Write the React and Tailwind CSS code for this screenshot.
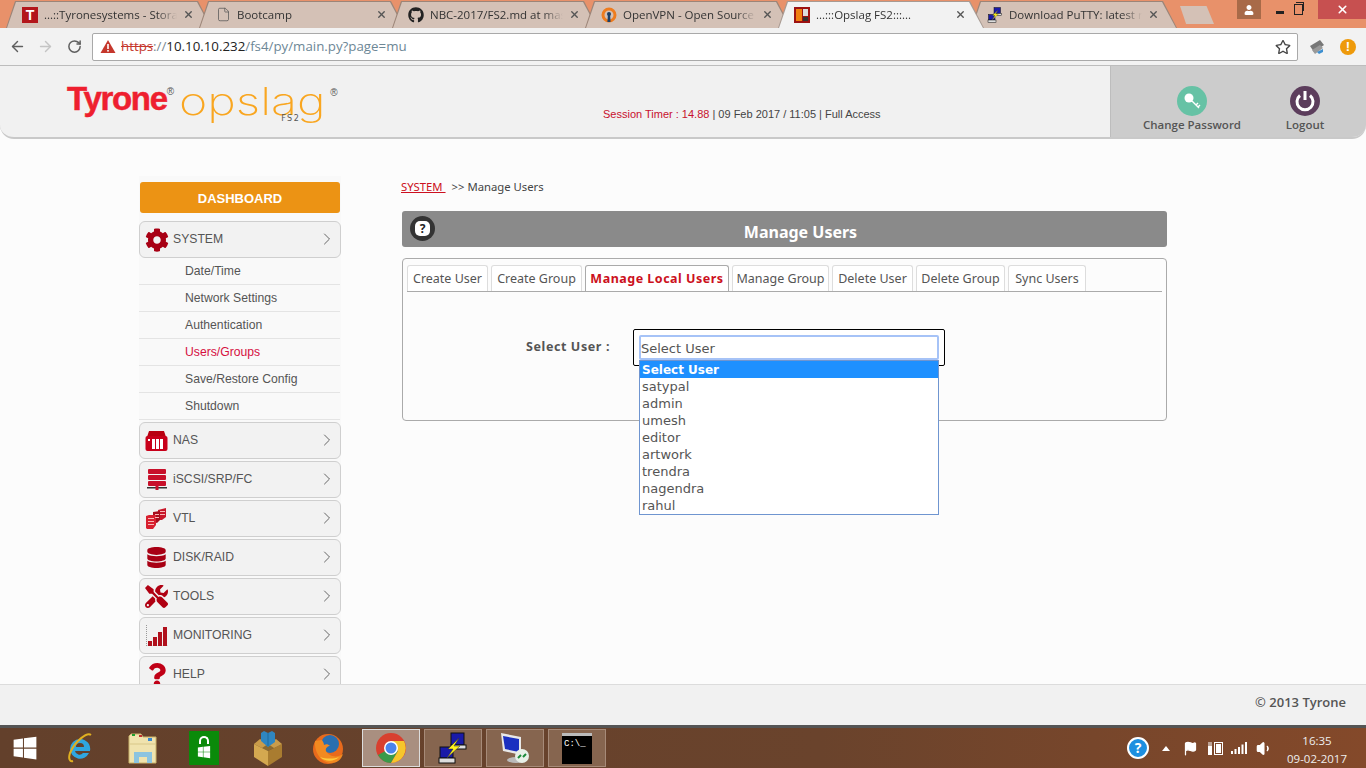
import { FaCog, FaDatabase, FaGithub, FaQuestion, FaTools, FaRegStar, FaWindows, FaUser } from "react-icons/fa";
import { ChevronRight, ArrowLeft, ArrowRight, RotateCw, X, File, Volume1, Flag } from "lucide-react";

const sans = "font-['Liberation_Sans',Arial,sans-serif]";
const ui = "font-['Open_Sans','Noto_Sans',sans-serif]";
const tahoma = "font-['Noto_Sans','DejaVu_Sans',sans-serif]";
const verdana = "font-['DejaVu_Sans',Verdana,sans-serif]";

function TyroneFav() {
  return (
    <div className="w-4 h-4 bg-[#b3161b] flex items-center justify-center">
      <span className={`text-white font-bold text-[14px] leading-none ${sans}`}>T</span>
    </div>
  );
}

function OpenVpnFav() {
  return (
    <svg width="16" height="16" viewBox="0 0 16 16">
      <circle cx="8" cy="8" r="6" fill="none" stroke="#ee7c1f" strokeWidth="3" />
      <path d="M7 6h2l.6 9H6.400z" fill="#1d3f66" />
      <circle cx="8" cy="7" r="2" fill="#1d3f66" />
    </svg>
  );
}

function OpslagFav() {
  return (
    <svg width="16" height="16" viewBox="0 0 16 16">
      <rect width="16" height="16" fill="#9c1212" />
      <rect x="2" y="2" width="6" height="12" fill="#f08010" />
      <rect x="9" y="2" width="5" height="7" fill="#ddd" />
      <rect x="9" y="10" width="5" height="4" fill="#333" />
    </svg>
  );
}

function PuttyIcon({ size = 16 }) {
  return (
    <svg width={size} height={size} viewBox="0 0 32 32">
      <rect x="14" y="1" width="13" height="12" fill="#1a1aa8" stroke="#111" />
      <rect x="14" y="13" width="15" height="4" fill="#ddd" stroke="#111" />
      <rect x="3" y="15" width="13" height="11" fill="#1a1aa8" stroke="#111" />
      <rect x="2" y="26" width="16" height="5" fill="#ddd" stroke="#111" />
      <path d="M22 6L11 17h5l-6 9 13-12h-6z" fill="#fff21a" stroke="#333" strokeWidth=".5" />
    </svg>
  );
}

function Tab({ icon, title, active }) {
  return (
    <div className={`relative w-[206px] h-[27px] -mr-[13px] shrink-0 [clip-path:polygon(0_100%,9px_0,calc(100%-14px)_0,100%_100%)] ${active ? "z-10 bg-[#a89a92]" : "bg-[#9c8578]"}`}>
      <div
        className={`h-full flex items-center pl-[15px] pr-[13px] gap-[6px] [clip-path:polygon(1px_100%,10px_1px,calc(100%-15px)_1px,calc(100%-1px)_100%)] ${
          active ? "bg-[#f2f2f2]" : "bg-[#d4c1b6]"
        }`}
      >
        <div className="w-4 h-4 shrink-0 ml-[1px] flex items-center justify-center">{icon}</div>
        <span className={`flex-1 min-w-0 whitespace-nowrap overflow-hidden text-[11.5px] text-[#333] ${ui} [mask-image:linear-gradient(90deg,#000_85%,transparent)]`}>
          {title}
        </span>
        <X size={11} strokeWidth={3} className="shrink-0 mr-[5px] text-[#555]" />
      </div>
    </div>
  );
}

function TabStrip() {
  return (
    <div className="h-[28px] bg-[#e8916a] flex items-end pl-[6px] shrink-0 relative">
      <Tab icon={<TyroneFav />} title="...::Tyronesystems - Storage" />
      <Tab icon={<File size={15} strokeWidth={1.2} className="text-[#555]" />} title="Bootcamp" />
      <Tab icon={<FaGithub size={16} className="text-[#222]" />} title="NBC-2017/FS2.md at master" />
      <Tab icon={<OpenVpnFav />} title="OpenVPN - Open Source VPN" />
      <Tab icon={<OpslagFav />} title="...:::Opslag FS2:::..." active />
      <Tab icon={<PuttyIcon />} title="Download PuTTY: latest release" />
      <div className="w-[34px] h-[18px] mb-[4px] ml-[16px] bg-[#d4c1b6] [clip-path:polygon(0_0,78%_0,100%_100%,18%_100%)]" />
      <div className="ml-auto flex h-[19px] self-start">
        <div className="w-[24px] bg-[#a86a48] flex items-center justify-center">
          <FaUser size={10} className="text-white" />
        </div>
        <div className="w-[57px] flex items-center justify-center gap-[10px]">
          <div className="w-[8px] h-[3px] mt-[5px] bg-[#222]" />
          <div className="relative w-[9px] h-[11px] border-[1.5px] border-[#222]">
            <div className="absolute -top-[3px] left-[1px] w-[8px] h-[9px] border-t border-r border-[#222]" />
          </div>
        </div>
        <div className="w-[48px] bg-[#c75050] flex items-center justify-center">
          <X size={13} strokeWidth={3} className="text-white" />
        </div>
      </div>
    </div>
  );
}

function Toolbar() {
  return (
    <div className="h-[38px] bg-[#f2f2f2] border-b border-[#bdbdbd] flex items-center pl-[9px] shrink-0 relative">
      <ArrowLeft size={17} strokeWidth={2} className="text-[#5f5f5f]" />
      <ArrowRight size={17} strokeWidth={2} className="text-[#c4c4c4] ml-[11px]" />
      <RotateCw size={15} strokeWidth={2.4} className="text-[#5f5f5f] ml-[13px]" />
      <div className={`ml-[10px] w-[1206px] h-[28px] bg-white border border-[#a9a9a9] rounded-[2px] flex items-center pl-[7px] pr-[6px] text-[13.3px] ${ui}`}>
        <svg width="16" height="15" viewBox="0 0 16 15">
          <path d="M8 1l7.500 13H.5z" fill="#c5372c" />
          <rect x="7.200" y="5" width="1.600" height="5" fill="#fff" />
          <rect x="7.200" y="11" width="1.600" height="1.600" fill="#fff" />
        </svg>
        <span className="ml-[5px] text-[#c5372c] line-through">https</span>
        <span className="text-[#7b8a93]">://</span>
        <span className="text-[#222]">10.10.10.232</span>
        <span className="text-[#6d8796]">/fs4/py/main.py?page=mu</span>
        <FaRegStar size={16} className="ml-auto text-[#444]" />
      </div>
      <svg className="ml-[10px]" width="18" height="18" viewBox="0 0 18 18">
        <path d="M2 8l10-6 4 5-10 7z" fill="#777" />
        <path d="M4 12l8-5 3 3-8 6z" fill="#999" />
        <path d="M9 14l6-3v3l-4 2z" fill="#3d8fd0" />
      </svg>
      <div className={`ml-[14px] w-[16px] h-[16px] rounded-full bg-[#ee9a0b] flex items-center justify-center text-white font-bold text-[13px] leading-none ${sans}`}>!</div>
    </div>
  );
}

function Header() {
  return (
    <div className="h-[73px] bg-[#f1f1f1] border-b-2 border-[#c9c9c9] rounded-bl-[14px] rounded-br-[14px] flex shrink-0 overflow-hidden">
      <div className="w-[603px] pl-[67px] pt-[14px] flex items-start shrink-0">
        <span className={`text-[#ee1f2f] font-bold text-[33px] leading-[38px] tracking-[-1.3px] [-webkit-text-stroke:0.5px_#ee1f2f] ${sans}`}>Tyrone</span>
        <span className={`text-[#555] text-[10px] leading-none mt-[7px] ${sans}`}>®</span>
        <div className="relative ml-[5px] w-[151px] h-[44px]">
          <span className="absolute left-0 -top-[1px] origin-left scale-x-[1.27] text-[#f9a620] font-['Inter',sans-serif] font-extralight text-[38px] leading-[44px]">opslag</span>
          <span className={`absolute left-[102px] top-[35px] text-[#555] text-[8px] leading-none tracking-[1.5px] ${verdana}`}>FS2</span>
        </div>
        <span className={`text-[#555] text-[10px] leading-none mt-[8px] ${sans}`}>®</span>
      </div>
      <div className={`flex-1 pt-[42px] text-[11px] leading-[13px] text-[#444] ${sans}`}>
        <span className="text-[#c8102e]">Session Timer : 14.88</span> | 09 Feb 2017 / 11:05 | Full Access
      </div>
      <div className={`w-[256px] bg-[#cccccc] border-l border-[#bdbdbd] relative flex text-[11.5px] font-semibold text-[#555] ${ui}`}>
        <div className="w-[162px] flex flex-col items-center pt-[20px]">
          <svg width="30" height="30" viewBox="0 0 30 30">
            <circle cx="15" cy="15" r="15" fill="#66c2a5" />
            <circle cx="12" cy="12" r="4.500" fill="#fff" />
            <path d="M15 15l7 7M19 19l2-2M21 21l2-2" stroke="#fff" strokeWidth="1.400" />
          </svg>
          <span className="leading-[16px] mt-[1px]">Change Password</span>
        </div>
        <div className="w-[64px] flex flex-col items-center pt-[20px]">
          <svg width="30" height="30" viewBox="0 0 30 30">
            <circle cx="15" cy="15" r="15" fill="#5c3d5c" />
            <path d="M10 9.500a8 8 0 1 0 10 0" fill="none" stroke="#fff" strokeWidth="3" />
            <path d="M15 5v9" stroke="#fff" strokeWidth="3" />
          </svg>
          <span className="leading-[16px] mt-[1px]">Logout</span>
        </div>
      </div>
    </div>
  );
}

const NasIcon = (
  <svg width="23" height="22" viewBox="0 0 23 22">
    <path d="M2 7l2-6h15l2 6z" fill="#b80010" />
    <rect x="0.500" y="6" width="22" height="15" rx="2" fill="#c8001a" />
    <rect x="7" y="9" width="3" height="10" fill="#fff" />
    <rect x="11" y="9" width="3" height="10" fill="#fff" />
    <rect x="15" y="9" width="3" height="10" fill="#fff" />
    <rect x="3" y="9" width="2" height="2" fill="#fff" />
  </svg>
);

const ScsiIcon = (
  <svg width="20" height="21" viewBox="0 0 20 21">
    <rect x="1" y="0" width="18" height="5" rx="1" fill="#c8102a" />
    <rect x="1" y="6" width="18" height="5" rx="1" fill="#c8102a" />
    <rect x="1" y="12" width="18" height="5" rx="1" fill="#c8102a" />
    <rect x="0" y="18" width="20" height="1.500" fill="#333" />
    <rect x="8.500" y="16" width="3" height="5" fill="#c8102a" />
  </svg>
);

const VtlIcon = (
  <svg width="21" height="21" viewBox="0 0 21 21">
    <path d="M12 2l8-2v9l-4 3h-4z" fill="#c8182a" />
    <path d="M7 4l7-1v9l-3 3-4-1z" fill="#a80c1c" />
    <path d="M0 8l3-1h7v10l-3 4H1l-1-1z" fill="#d8202f" />
    <path d="M2 10h6v1H2zM2 13h6v1H2zM2 16h6v1H2zM9 6h4v1H9zM9 9h4v1H9zM14 3h5v1h-5zM14 6h5v1h-5z" fill="#f8b8b8" />
  </svg>
);

const BarsIcon = (
  <svg width="22" height="21" viewBox="0 0 22 21">
    <path d="M0.500 0v21H22" fill="none" stroke="#999" strokeDasharray="1 1" />
    <rect x="2" y="16" width="4" height="5" fill="#b0101c" />
    <rect x="7" y="12" width="4" height="9" fill="#b0101c" />
    <rect x="12" y="7" width="4" height="14" fill="#b0101c" />
    <rect x="17" y="2" width="4" height="19" fill="#b0101c" />
  </svg>
);

const NAV = [
  { label: "NAS", icon: NasIcon },
  { label: "iSCSI/SRP/FC", icon: ScsiIcon },
  { label: "VTL", icon: VtlIcon },
  { label: "DISK/RAID", icon: <FaDatabase size={21} className="text-[#a80014]" /> },
  { label: "TOOLS", icon: <FaTools size={23} className="text-[#b00012]" /> },
  { label: "MONITORING", icon: BarsIcon },
  { label: "HELP", icon: <FaQuestion size={24} className="text-[#c00016]" /> },
];

const SUB = ["Date/Time", "Network Settings", "Authentication", "Users/Groups", "Save/Restore Config", "Shutdown"];

function NavItem({ icon, label }) {
  return (
    <div className="h-[37px] w-[202px] shrink-0 flex items-center bg-[#f2f2f2] border border-[#cfcfcf] rounded-[6px]">
      <div className="w-[33px] flex items-center justify-center shrink-0">{icon}</div>
      <span className="text-[#555] text-[12.2px]">{label}</span>
      <ChevronRight size={20} strokeWidth={1.2} className="ml-auto mr-[3px] mb-[2px] text-[#666]" />
    </div>
  );
}

function Sidebar() {
  return (
    <div className={`w-[202px] mt-[37px] pt-[6px] shrink-0 bg-[#f9f9f9] h-full ${sans}`}>
      <div className="mx-[1px] h-[31px] mb-[8px] pt-[3px] bg-[#ec9314] rounded-[3px] flex items-center justify-center text-white font-bold text-[13px]">DASHBOARD</div>
      <NavItem icon={<FaCog size={24} className="text-[#a80014]" />} label="SYSTEM" />
      <div className="mb-[2px]">
        {SUB.map((s) => (
          <div
            key={s}
            className={`h-[27px] pl-[46px] mr-[1px] flex items-center border-b border-[#e4e4e4] text-[12.2px] ${s === "Users/Groups" ? "text-[#d6103f]" : "text-[#555]"}`}
          >
            {s}
          </div>
        ))}
      </div>
      <div className="flex flex-col gap-[2px]">
        {NAV.map((n) => (
          <NavItem key={n.label} icon={n.icon} label={n.label} />
        ))}
      </div>
    </div>
  );
}

const TABS = [
  ["Create User", 81],
  ["Create Group", 91],
  ["Manage Local Users", 144],
  ["Manage Group", 97],
  ["Delete User", 81],
  ["Delete Group", 89],
  ["Sync Users", 78],
];

const USERS = ["satypal", "admin", "umesh", "editor", "artwork", "trendra", "nagendra", "rahul"];

function Content() {
  return (
    <div className={`ml-[60px] w-[766px] pt-[41px] ${tahoma}`}>
      <div className="h-[14px] text-[11.3px] leading-[14px] text-[#444] mb-[17px]">
        <span className="text-[#cc1020] underline">SYSTEM&nbsp;</span>
        <span className="ml-[6px]">&gt;&gt; Manage Users</span>
      </div>
      <div className="relative ml-[1px] h-[36px] bg-[#8a8a8a] rounded-[3px] flex items-center justify-center pl-[32px] pt-[6px] text-white font-bold text-[16px]">
        Manage Users
        <div className="absolute left-[8px] top-[5px] w-[25px] h-[25px] rounded-full bg-[#333] flex items-center justify-center">
          <div className="w-[15px] h-[15px] rounded-[5px] bg-white text-[#222] text-[12px] leading-[15px] font-bold text-center">?</div>
        </div>
      </div>
      <div className="relative ml-[1px] mt-[11px] h-[163px] w-[765px] border border-[#aaaaaa] rounded-[4px] px-[4px] pt-[6px]">
        <div className="flex gap-[3px] h-[27px] border-b border-[#aaaaaa]">
          {TABS.map(([t, w]) => {
            const active = t === "Manage Local Users";
            return (
              <div
                key={t}
                style={{ width: w }}
                className={`h-[26px] pt-[2px] flex items-center justify-center bg-white border border-b-0 rounded-t-[3px] text-[12.5px] whitespace-nowrap ${
                  active ? "border-[#aaaaaa] text-[#cc1020] font-bold tracking-[0.5px]" : "border-[#dddddd] text-[#555]"
                }`}
              >
                {t}
              </div>
            );
          })}
        </div>
        <div className="absolute left-[123px] top-[80px] text-[12.5px] leading-[16px] font-bold tracking-[0.6px] text-[#555] whitespace-nowrap">Select User :</div>
        <div className="absolute left-[230px] top-[70px] w-[312px] h-[37px] border border-black rounded-[2px] bg-white" />
        <div className={`absolute left-[236px] top-[76px] w-[300px] h-[25px] pt-[2px] bg-white border-2 border-[#a6c3f7] rounded-[2px] flex items-center text-[13px] text-[#555] ${verdana}`}>Select User</div>
        <div className={`absolute left-[236px] top-[101px] w-[300px] h-[155px] bg-white border border-[#6f95d0] text-[13px] leading-[17px] text-[#555] ${verdana}`}>
          <div className="h-[17px] pl-[2px] pt-[1px] bg-[#1e90ff] text-white font-bold text-[12px]">Select User</div>
          {USERS.map((u) => (
            <div key={u} className="h-[17px] pl-[2px]">{u}</div>
          ))}
        </div>
      </div>
    </div>
  );
}

function Footer() {
  return (
    <div className={`h-[41px] shrink-0 bg-[#f1f1f1] border-t border-[#dcdcdc] flex items-center justify-end pr-[20px] pb-[4px] text-[13px] font-semibold text-[#555] ${ui}`}>
      © 2013 Tyrone
    </div>
  );
}

function Slot({ children, w = 62, active, box, className = "" }) {
  return (
    <div
      style={{ width: w }}
      className={`h-[38px] shrink-0 flex items-center justify-center ${className} ${
        active ? "bg-[#a98f80] border border-[#ddd]" : box ? "bg-[#86654f] border border-[#a68a78]" : ""
      }`}
    >
      {children}
    </div>
  );
}

function Taskbar() {
  return (
    <div className={`h-[43px] shrink-0 border-t-[3px] border-[#555] bg-[linear-gradient(90deg,#63402b,#6a432c_60%,#84492a)] flex items-center ${ui}`}>
      <Slot w={50}><FaWindows size={26} className="text-white" /></Slot>
      <Slot w={60}>
        <svg width="30" height="34" viewBox="0 0 30 34">
          <path d="M15 8a10 10 0 0 0-10 10 10 10 0 0 0 19 4h-6a4.500 4.500 0 0 1-8-2h15a10 10 0 0 0-10-12zm-4 8a4 4 0 0 1 8 0z" fill="#2fa6e0" />
          <path d="M26 4c-4-3-16 6-21 18-2 6 0 9 3 8" fill="none" stroke="#e0b020" strokeWidth="2" />
        </svg>
      </Slot>
      <Slot w={66}>
        <svg width="32" height="34" viewBox="0 0 32 34">
          <path d="M2 5l2-2h10l2 3h13v26H2z" fill="#f0e3ae" stroke="#c9b26a" />
          <rect x="5" y="3" width="3" height="2" fill="#20a030" />
          <rect x="12" y="4" width="3" height="2" fill="#c03030" />
          <rect x="21" y="7" width="4" height="3" fill="#3a8ad0" />
          <path d="M2 13h27" stroke="#d8c788" />
          <path d="M7 32V21h18v11h-5v-6h-8v6z" fill="#8cc4e0" />
        </svg>
      </Slot>
      <Slot w={56}>
        <div className="relative w-[30px] h-[34px] bg-[#0a8a0a] flex items-end justify-center pb-[6px]">
          <div className="absolute top-[5px] left-[10px] w-[10px] h-[8px] border-2 border-b-0 border-white rounded-t-full" />
          <FaWindows size={14} className="text-white" />
        </div>
      </Slot>
      <Slot w={72}>
        <svg width="30" height="36" viewBox="0 0 30 36">
          <path d="M1 14l14-6 14 6-14 7z" fill="#8a6a30" />
          <path d="M1 14v13l14 9V21z" fill="#d4a850" />
          <path d="M29 14v13l-14 9V21z" fill="#a97c30" />
          <path d="M1 14l6-5 8 5-6 4zM29 14l-6-5-8 5 6 4z" fill="#c99c4a" />
          <path d="M8 11V3l3-2 4 2 4-2 3 2v9l-7 5z" fill="#2f86c0" />
          <path d="M15 3v13" stroke="#1c6aa0" />
        </svg>
      </Slot>
      <Slot w={48}>
        <svg width="32" height="34" viewBox="0 0 32 34">
          <circle cx="16" cy="18" r="15" fill="#e86a1c" />
          <circle cx="18" cy="13" r="9" fill="#2a6fb0" />
          <path d="M3 10c-1 12 7 22 16 22 6 0 10-3 12-9-5 4-14 3-17-3-1-3 2-5 4-5-2-2-4-2-6-1 0-2-1-3-2-5-3 0-5 1-7 1z" fill="#f28a20" />
          <path d="M8 26c5 5 14 5 19 0-5 2-13 2-19 0z" fill="#ffcb3d" />
        </svg>
      </Slot>
      <Slot w={58} active className="ml-[10px]">
        <svg width="30" height="30" viewBox="0 0 30 30">
          <circle cx="15" cy="15" r="15" fill="#d8402f" />
          <path d="M15 15L2 22a15 15 0 0 0 13 8l7-12z" fill="#3a9a4a" />
          <path d="M15 8h13a15 15 0 0 1-13 22l7-12z" fill="#f6c62c" />
          <circle cx="15" cy="15" r="7" fill="#fff" />
          <circle cx="15" cy="15" r="5.500" fill="#4a84ec" />
        </svg>
      </Slot>
      <div className="w-[4px]" />
      <Slot w={58} box><PuttyIcon size={32} /></Slot>
      <div className="w-[4px]" />
      <Slot w={58} box>
        <svg width="32" height="34" viewBox="0 0 32 34">
          <path d="M2 2l20 4v18L4 20z" fill="#e8e8e8" />
          <path d="M4 5l16 3v13L6 18z" fill="#1a2fc0" />
          <ellipse cx="17" cy="29" rx="9" ry="3" fill="#bbb" />
          <circle cx="23" cy="25" r="7" fill="#e8f0e8" />
          <path d="M19 27l3-3M27 23l-3 3" stroke="#1a8a3a" strokeWidth="2" />
        </svg>
      </Slot>
      <div className="w-[4px]" />
      <Slot w={58} box>
        <div className="w-[30px] h-[31px] bg-black border-t-[3px] border-[#bbb] text-white text-[9px] leading-[16px] pl-[2px] font-['Liberation_Mono',monospace]">C:\_</div>
      </Slot>
      <div className="ml-auto flex items-center text-white">
        <div className="w-[22px] h-[22px] rounded-full bg-[#1d8fe0] border-2 border-white flex items-center justify-center font-bold text-[14px] leading-none">?</div>
        <div className="ml-[13px] w-0 h-0 border-x-[4px] border-x-transparent border-b-[5px] border-b-white" />
        <Flag size={15} className="ml-[13px] text-white" fill="#fff" />
        <svg className="ml-[10px]" width="16" height="16" viewBox="0 0 16 16">
          <rect x="0" y="6" width="4" height="9" fill="#fff" />
          <path d="M1 2v4M3 2v4" stroke="#fff" />
          <rect x="6.500" y="2.500" width="8" height="12" fill="none" stroke="#fff" />
          <rect x="8" y="4" width="5" height="9" fill="#fff" />
        </svg>
        <svg className="ml-[7px]" width="16" height="12" viewBox="0 0 16 12">
          <rect x="0" y="9" width="2" height="3" fill="#fff" />
          <rect x="3.500" y="7" width="2" height="5" fill="#fff" />
          <rect x="7" y="5" width="2" height="7" fill="#fff" />
          <rect x="10.500" y="2.500" width="2" height="9.500" fill="#fff" />
          <rect x="14" y="0" width="2" height="12" fill="#fff" />
        </svg>
        <Volume1 size={17} className="ml-[9px] text-white" fill="#fff" />
        <div className="w-[76px] ml-[6px] mr-[11px] mt-[3px] text-center text-[11.5px] leading-[18px] text-[#eee]">
          <div>16:35</div>
          <div>09-02-2017</div>
        </div>
      </div>
    </div>
  );
}

export default function App() {
  return (
    <div className="w-[1366px] h-[768px] flex flex-col overflow-hidden bg-[#fcfcfc]">
      <TabStrip />
      <Toolbar />
      <Header />
      <div className="flex-1 min-h-0 overflow-hidden flex pl-[139px]">
        <Sidebar />
        <Content />
      </div>
      <Footer />
      <Taskbar />
    </div>
  );
}
